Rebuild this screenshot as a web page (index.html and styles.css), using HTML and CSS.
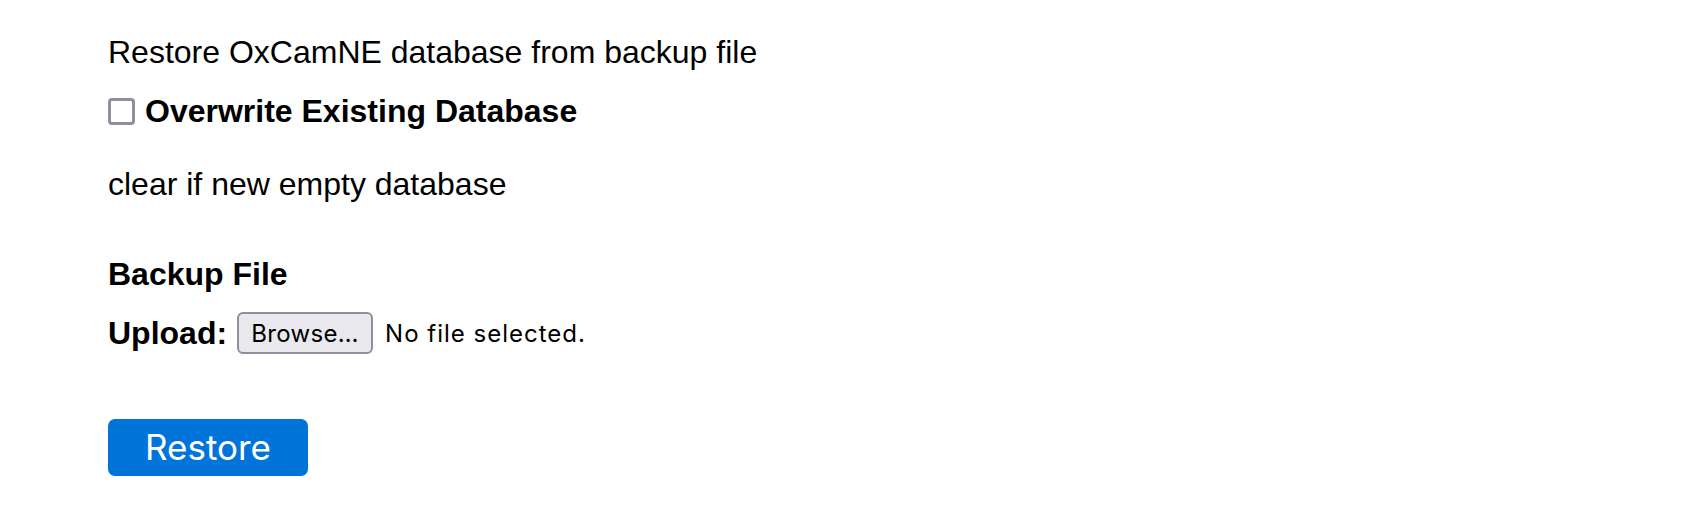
FILE: index.html
```html
<!DOCTYPE html>
<html lang="en">
<head>
<meta charset="utf-8">
<title>Restore database</title>
<link rel="stylesheet" href="styles.css">
</head>
<body>
<main class="page">
  <p class="intro">Restore OxCamNE database from backup file</p>
  <label class="check"><span class="box"></span><span class="check-label">Overwrite Existing Database</span></label>
  <p class="hint">clear if new empty database</p>
  <h3 class="section">Backup File</h3>
  <div class="upload">
    <span class="upload-label">Upload:</span>
    <span class="browse">Browse…</span>
    <span class="nofile">No file selected.</span>
  </div>
  <button class="restore" type="button">Restore</button>
</main>
</body>
</html>
```
FILE: styles.css
```css
html, body {
  margin: 0;
  padding: 0;
  background: #ffffff;
}

.page {
  display: flex;
  flex-direction: column;
  align-items: flex-start;
  padding: 34px 0 0 108px;
  font-family: "Liberation Sans", Arial, sans-serif;
  font-size: 32px;
  line-height: 37px;
  color: #000000;
}

.intro,
.hint,
.section {
  margin: 0;
}

.intro {
  height: 37px;
}

.check {
  display: flex;
  align-items: center;
  gap: 10px;
  margin-top: 22px;
  font-weight: bold;
}

.box {
  width: 27px;
  height: 27px;
  box-sizing: border-box;
  border: 3px solid #8f8f9d;
  border-radius: 4px;
  background: #ffffff;
}

.hint {
  margin-top: 36px;
}

.section {
  margin-top: 53px;
  font-size: 32px;
  font-weight: bold;
}

.upload {
  display: flex;
  align-items: center;
  margin-top: 19px;
  height: 42px;
}

.upload-label {
  font-weight: bold;
  margin-right: 10px;
}

.browse {
  box-sizing: border-box;
  height: 42px;
  width: 136px;
  display: flex;
  align-items: center;
  justify-content: center;
  border: 2px solid #8f8f9d;
  border-radius: 6px;
  background: #e9e9ed;
  font-family: Inter, "Noto Sans", sans-serif;
  font-size: 24px;
  letter-spacing: 0.3px;
  color: #000000;
}

.nofile {
  margin-left: 12px;
  font-family: Inter, "Noto Sans", sans-serif;
  font-size: 24px;
  letter-spacing: 1px;
}

.restore {
  margin-top: 65px;
  width: 200px;
  height: 57px;
  border: none;
  border-radius: 7px;
  background: #0074d9;
  color: #ffffff;
  font-family: Inter, "Noto Sans", sans-serif;
  font-size: 35px;
  padding: 0;
  line-height: 57px;
}
```
